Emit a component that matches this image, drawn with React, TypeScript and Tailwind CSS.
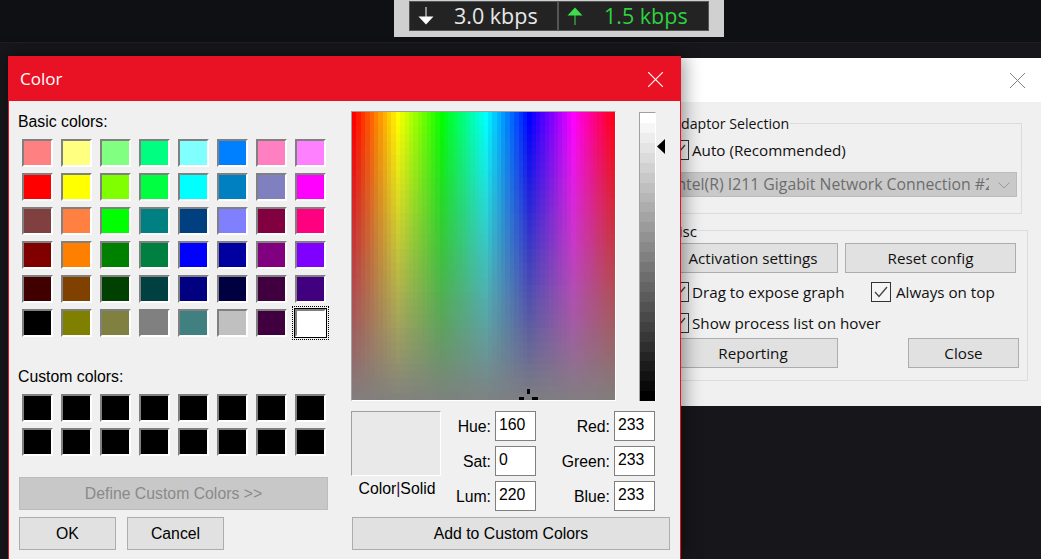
import React from 'react';

const basicColors = [
    '#ff8080', '#ffff80', '#80ff80', '#00ff80', '#80ffff', '#0080ff', '#ff80c0', '#ff80ff',
    '#ff0000', '#ffff00', '#80ff00', '#00ff40', '#00ffff', '#0080c0', '#8080c0', '#ff00ff',
    '#804040', '#ff8040', '#00ff00', '#008080', '#004080', '#8080ff', '#800040', '#ff0080',
    '#800000', '#ff8000', '#008000', '#008040', '#0000ff', '#0000a0', '#800080', '#8000ff',
    '#400000', '#804000', '#004000', '#004040', '#000080', '#000040', '#400040', '#400080',
    '#000000', '#808000', '#808040', '#808080', '#408080', '#c0c0c0', '#400040', '#ffffff',
];

const Swatch = ({ color, selected }: { color: string; selected?: boolean }) => (
    <div className="relative h-[28px] w-[31px]">
        <div
            className="h-full w-full border-2 border-t-[#808080] border-l-[#808080] border-r-white border-b-white"
            style={{ backgroundColor: color }}
        />
        {selected && (
            <div className="absolute -inset-[3px] border border-dotted border-black p-px">
                <div className="h-full w-full border border-black" />
            </div>
        )}
    </div>
);

const Spectrum = () => {
    const cols = 60;
    const rows = 40;
    const cells = [];
    for (let y = 0; y < rows; y++) {
        for (let x = 0; x < cols; x++) {
            cells.push(
                <rect
                    key={`${x}-${y}`}
                    x={x}
                    y={y}
                    width={1.02}
                    height={1.02}
                    fill={`hsl(${(x * 360) / cols}, ${100 - (y * 100) / rows}%, 50%)`}
                />
            );
        }
    }
    return (
        <div className="relative h-[290px] w-[265px] overflow-hidden border-t border-l border-t-[#a0a0a0] border-l-[#a0a0a0] border-r border-b border-r-white border-b-white">
            <svg className="block h-full w-full" viewBox={`0 0 ${cols} ${rows}`} preserveAspectRatio="none" shapeRendering="crispEdges">
                {cells}
            </svg>
            <svg className="absolute bottom-0 right-[76px] h-[11px] w-[20px]" viewBox="0 0 20 11">
                <rect x="8" y="0" width="3" height="5" fill="#000" />
                <rect x="0" y="8" width="5" height="3" fill="#000" />
                <rect x="13" y="8" width="6" height="3" fill="#000" />
            </svg>
        </div>
    );
};

const LumBar = () => {
    const steps = 29;
    return (
        <div className="flex h-[289px] w-[17px] flex-col border-t border-l border-r border-t-[#a0a0a0] border-l-[#a0a0a0] border-r-white">
            {Array.from({ length: steps }).map((_, i) => {
                const v = Math.round(255 - (i * 255) / (steps - 1));
                return <div key={i} className="flex-1" style={{ backgroundColor: `rgb(${v},${v},${v})` }} />;
            })}
        </div>
    );
};

const NumField = ({ label, value, w }: { label: string; value: string; w: string }) => (
    <div className="flex h-[30px] items-center justify-end">
        <span className={`${w} pt-[2px] text-right`}>{label}</span>
        <div className="ml-[4px] h-[30px] w-[41px] border border-[#808080] bg-white pl-[3px] leading-[25px]">{value}</div>
    </div>
);

const DialogButton = ({ className, children }: { className: string; children: React.ReactNode }) => (
    <div className={`flex items-center justify-center border border-[#adadad] bg-[#e1e1e1] ${className}`}>{children}</div>
);

const ColorDialog = () => (
    <div className="absolute left-[8px] top-[56px] h-[503px] w-[673px] overflow-hidden border-x border-t border-[#e81123] bg-[#f0f0f0] font-['Liberation_Sans',sans-serif] text-[15.8px] text-black shadow-[2px_0_18px_rgba(0,0,0,0.45)]">
        <div className="flex h-[44px] items-center justify-between bg-[#e81224] pl-[11px] pr-[17px] font-['Open_Sans',sans-serif] text-white">
            <span className="text-[17px]">Color</span>
            <svg width="15" height="15" viewBox="0 0 15 15" stroke="#fff" strokeWidth="1.1">
                <path d="M0 0L15 15M15 0L0 15" />
            </svg>
        </div>
        <div className="flex">
            <div className="w-[342px] shrink-0">
                <div className="pl-[9px] pt-[12px] leading-[18px]">Basic colors:</div>
                <div className="ml-[13px] mt-[8px] grid w-fit grid-cols-[repeat(8,31px)] gap-x-[8px] gap-y-[6px]">
                    {basicColors.map((c, i) => (
                        <Swatch key={i} color={c} selected={i === 47} />
                    ))}
                </div>
                <div className="pl-[9px] pt-[31px] leading-[18px]">Custom colors:</div>
                <div className="ml-[13px] mt-[8px] grid w-fit grid-cols-[repeat(8,31px)] gap-x-[8px] gap-y-[6px]">
                    {Array.from({ length: 16 }).map((_, i) => (
                        <Swatch key={i} color="#000000" />
                    ))}
                </div>
                <div className="ml-[10px] mt-[21px] flex h-[33px] w-[309px] items-center justify-center border border-[#bcbcbc] bg-[#c8c8c8] text-[#8a8a8a]">
                    Define Custom Colors &gt;&gt;
                </div>
                <div className="ml-[10px] mt-[7px] flex gap-[11px]">
                    <DialogButton className="h-[33px] w-[97px]">OK</DialogButton>
                    <DialogButton className="h-[33px] w-[97px]">Cancel</DialogButton>
                </div>
            </div>
            <div className="w-[329px] shrink-0">
                <div className="flex pt-[10px]">
                    <Spectrum />
                    <div className="ml-[23px] mt-px">
                        <LumBar />
                    </div>
                    <svg className="ml-[1px] mt-[28px]" width="8" height="15" viewBox="0 0 8 15">
                        <path d="M8 0V15L0 7.5Z" fill="#000" />
                    </svg>
                </div>
                <div className="mt-[10px] flex">
                    <div className="w-[90px]">
                        <div className="h-[65px] border border-t-[#a0a0a0] border-l-[#a0a0a0] border-r-white border-b-white bg-[#e9e9e9]" />
                        <div className="ml-[2px] mt-[4px] whitespace-nowrap text-center leading-[18px]">
                            Color<span className="text-[#400040]">|</span>Solid
                        </div>
                    </div>
                    <div className="flex w-[95px] flex-col gap-[5px]">
                        <NumField label="Hue:" value="160" w="w-[40px]" />
                        <NumField label="Sat:" value="0" w="w-[40px]" />
                        <NumField label="Lum:" value="220" w="w-[40px]" />
                    </div>
                    <div className="flex w-[119px] flex-col gap-[5px]">
                        <NumField label="Red:" value="233" w="w-[60px]" />
                        <NumField label="Green:" value="233" w="w-[60px]" />
                        <NumField label="Blue:" value="233" w="w-[60px]" />
                    </div>
                </div>
                <DialogButton className="ml-px mt-[6px] h-[33px] w-[318px]">Add to Custom Colors</DialogButton>
            </div>
        </div>
    </div>
);

const CheckRow = ({ label, className }: { label: string; className?: string }) => (
    <div className={`flex h-[20px] items-center ${className || ''}`}>
        <div className="flex h-[20px] w-[20px] items-center justify-center border border-[#333] bg-[#f5f5f5]">
            <svg width="14" height="12" viewBox="0 0 14 12" fill="none" stroke="#444" strokeWidth="1.3">
                <path d="M1 6L5 10.5L13 1" />
            </svg>
        </div>
        <span>{label}</span>
    </div>
);

const SmallButton = ({ className, children }: { className: string; children: React.ReactNode }) => (
    <div className={`flex h-[30px] items-center justify-center border border-[#adadad] bg-[#e1e1e1] ${className}`}>{children}</div>
);

const AdapterWindow = () => (
    <div className="absolute left-[640px] top-[58px] h-[348px] w-[401px] bg-[#f0f0f0] font-['Open_Sans',sans-serif] text-[15.2px] text-[#111]">
        <div className="flex h-[44px] items-center justify-end bg-white pr-[16px]">
            <svg width="15" height="15" viewBox="0 0 15 15" stroke="#808080" strokeWidth="1">
                <path d="M0 0L15 15M15 0L0 15" />
            </svg>
        </div>
        <div className="ml-[10px] mt-[21px] h-[91px] w-[372px] border border-[#dcdcdc]">
            <div className="ml-[20px] -mt-[10px] w-fit bg-[#f0f0f0] px-px text-[14.2px] leading-[20px]">Adaptor Selection</div>
            <CheckRow label="Auto (Recommended)" className="ml-[18px] mt-[6px] gap-[3px]" />
            <div className="ml-[10px] mt-[12px] flex h-[25px] w-[356px] items-center border border-[#bcbcbc] bg-[#c9c9c9] pl-[10px] pt-px text-[15.8px] text-[#6d6d6d]">
                <div className="w-[317px] overflow-hidden whitespace-nowrap">Intel(R) I211 Gigabit Network Connection #2</div>
                <svg className="ml-[9px]" width="12" height="7" viewBox="0 0 12 7" fill="none" stroke="#999" strokeWidth="1">
                    <path d="M0.5 0.5L6 6L11.5 0.5" />
                </svg>
            </div>
        </div>
        <div className="ml-[12px] mt-[16px] h-[151px] w-[376px] border border-[#dcdcdc]">
            <div className="ml-[11px] -mt-[10px] w-fit bg-[#f0f0f0] px-px leading-[20px]">Misc</div>
            <div className="ml-[15px] mt-[2px] flex gap-[7px]">
                <SmallButton className="w-[170px]">Activation settings</SmallButton>
                <SmallButton className="w-[171px]">Reset config</SmallButton>
            </div>
            <div className="ml-[16px] mt-[9px] flex">
                <CheckRow label="Drag to expose graph" className="w-[202px] gap-[3px]" />
                <CheckRow label="Always on top" className="gap-[5px]" />
            </div>
            <CheckRow label="Show process list on hover" className="ml-[16px] mt-[11px] gap-[3px]" />
            <div className="ml-[15px] mt-[5px] flex justify-between pr-[8px]">
                <SmallButton className="w-[170px]">Reporting</SmallButton>
                <SmallButton className="w-[111px]">Close</SmallButton>
            </div>
        </div>
    </div>
);

const SpeedMeter = () => (
    <div className="ml-[394px] h-[37px] w-[330px] bg-[#d0d0d0] pl-[15px] pt-px">
        <div className="flex h-[30px] w-[300px] border border-[#555] bg-[#232323] font-['Open_Sans',sans-serif] text-[21.5px] leading-[28px]">
            <div className="flex w-[149px] items-center border-r-2 border-[#555] pl-[8px] text-[#e8e8e8]">
                <svg width="16" height="18" viewBox="0 0 16 18">
                    <path d="M7.5 0H8.5V10H7.5Z M0.5 9.5H15.5L8 17.5Z" fill="#fff" />
                </svg>
                <span className="ml-[20px]">3.0 kbps</span>
            </div>
            <div className="flex flex-1 items-center pl-[8px] text-[#2fd13f]">
                <svg width="16" height="18" viewBox="0 0 16 18">
                    <path d="M8 0.5L15.5 8.5H0.5Z M7.5 8H8.5V18H7.5Z" fill="#3ddc4a" />
                </svg>
                <span className="ml-[21px]">1.5 kbps</span>
            </div>
        </div>
    </div>
);

export default function App() {
    return (
        <div className="relative h-[559px] w-[1041px] overflow-hidden bg-[#17171b]">
            <div className="h-[43px] border-b border-[#1e1e24] bg-[#0f1014]">
                <SpeedMeter />
            </div>
            <AdapterWindow />
            <ColorDialog />
        </div>
    );
}
